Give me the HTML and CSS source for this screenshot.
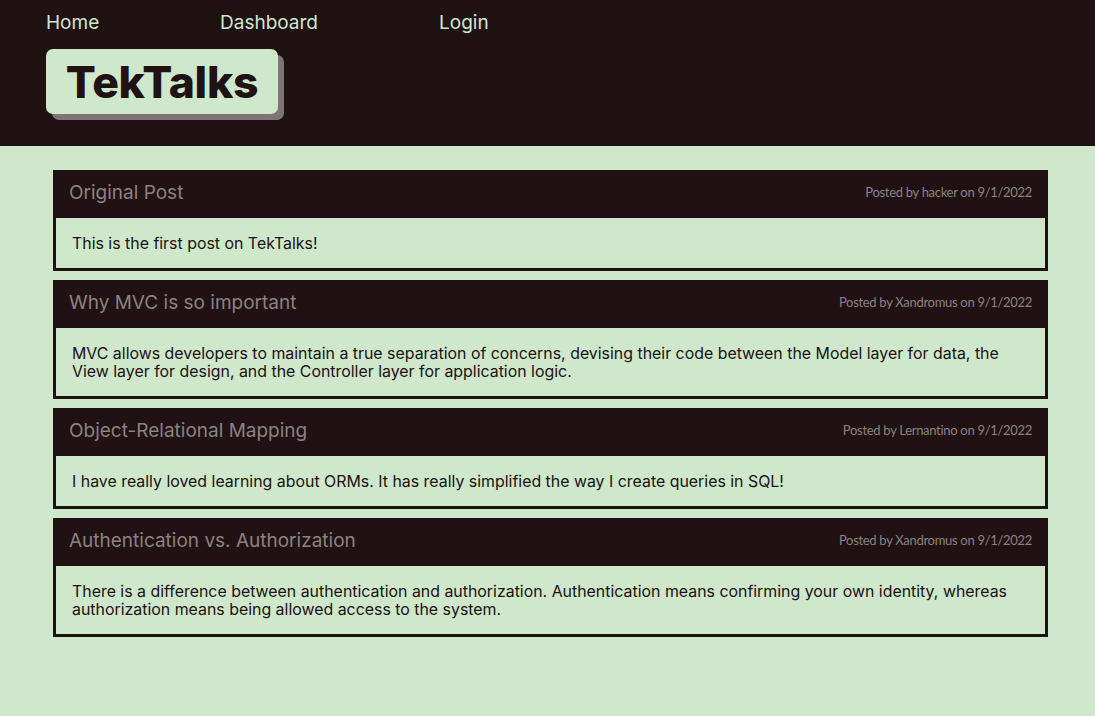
FILE: index.html
```html
<!DOCTYPE html>
<html>
<head>
<meta charset="utf-8">
<link rel="stylesheet" href="styles.css">
</head>
<body>
<header class="top">
  <nav class="nav">
    <a class="nav-link nav-home" href="#">Home</a>
    <a class="nav-link nav-dash" href="#">Dashboard</a>
    <a class="nav-link" href="#">Login</a>
  </nav>
  <h1 class="logo">TekTalks</h1>
</header>
<main class="posts">
  <article class="post">
    <div class="post-head"><h2 class="post-title">Original Post</h2><span class="post-meta">Posted by hacker on 9/1/2022</span></div>
    <div class="post-body">This is the first post on TekTalks!</div>
  </article>
  <article class="post">
    <div class="post-head"><h2 class="post-title">Why MVC is so important</h2><span class="post-meta">Posted by Xandromus on 9/1/2022</span></div>
    <div class="post-body">MVC allows developers to maintain a true separation of concerns, devising their code between the Model layer for data, the View layer for design, and the Controller layer for application logic.</div>
  </article>
  <article class="post">
    <div class="post-head"><h2 class="post-title">Object-Relational Mapping</h2><span class="post-meta">Posted by Lernantino on 9/1/2022</span></div>
    <div class="post-body">I have really loved learning about ORMs. It has really simplified the way I create queries in SQL!</div>
  </article>
  <article class="post">
    <div class="post-head"><h2 class="post-title">Authentication vs. Authorization</h2><span class="post-meta">Posted by Xandromus on 9/1/2022</span></div>
    <div class="post-body">There is a difference between authentication and authorization. Authentication means confirming your own identity, whereas authorization means being allowed access to the system.</div>
  </article>
</main>
</body>
</html>
```
FILE: styles.css
```css
* { box-sizing: border-box; }
html, body { margin: 0; padding: 0; }
body {
  background: #cfe8cc;
  font-family: "Inter", "Noto Sans", sans-serif;
  color: #201112;
  min-height: 716px;
}
.top {
  background: #201112;
  height: 146px;
  padding: 11px 0 0 46px;
}
.nav {
  display: flex;
  align-items: center;
  height: 24px;
}
.nav-link {
  color: #cfe8cc;
  text-decoration: none;
  font-size: 19px;
  line-height: 24px;
}
.nav-home { width: 174px; }
.nav-dash { width: 219px; }
.logo {
  display: inline-block;
  margin: 14px 0 0 0;
  width: 232px;
  height: 65px;
  background: #cfe8cc;
  color: #201112;
  border-radius: 7px;
  box-shadow: 6px 6px 0 #7d7475;
  font-size: 44.5px;
  font-weight: 800;
  line-height: 66px;
  text-align: center;
  letter-spacing: -0.3px;
}
.posts {
  padding: 24px 47px 0 53px;
  display: flex;
  flex-direction: column;
  gap: 9px;
}
.post { display: flex; flex-direction: column; }
.post-head {
  background: #201112;
  height: 48px;
  display: flex;
  align-items: center;
  justify-content: space-between;
  padding: 0 16px 4px 16px;
}
.post-title {
  margin: 0;
  font-size: 19px;
  font-weight: 400;
  color: #8c8283;
}
.post-meta {
  font-family: "Lato", sans-serif;
  font-size: 13px;
  color: #8c8283;
  letter-spacing: -0.3px;
}
.post-body {
  border: 3px solid #201112;
  border-top: 0;
  padding: 17px 16px 15px 16px;
  font-size: 15.9px;
  line-height: 18px;
  color: #201112;
}
```
